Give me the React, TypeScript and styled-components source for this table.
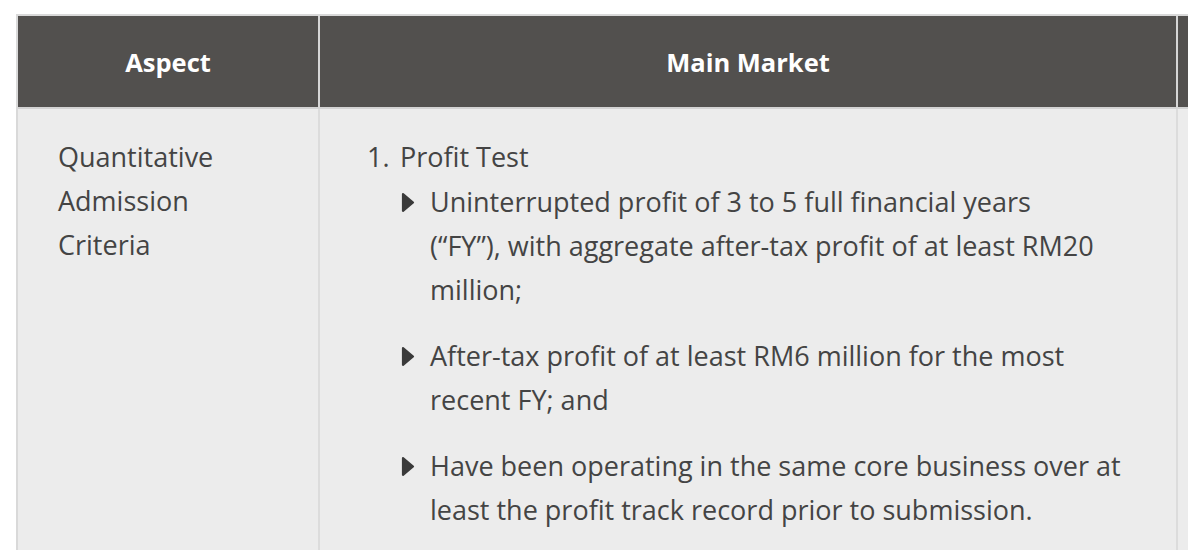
import React from "react";
import styled, { createGlobalStyle } from "styled-components";

const GlobalStyle = createGlobalStyle`
  html, body {
    margin: 0;
    padding: 0;
    overflow: hidden;
    background: #ffffff;
  }
  body {
    font-family: "Open Sans", "Noto Sans", "DejaVu Sans", sans-serif;
  }
`;

const Page = styled.div`
  padding: 14px 0 0 16px;
`;

const Table = styled.table`
  border-collapse: separate;
  border-spacing: 0;
  table-layout: fixed;
  width: 1562px;
  border-top: 2px solid #d9d9d9;
  border-left: 2px solid #d9d9d9;
`;

const Col = styled.col<{ $w: number }>`
  width: ${(p) => p.$w}px;
`;

const HeadCell = styled.th`
  height: 91px;
  padding: 0;
  background: #52504e;
  color: #ffffff;
  font-weight: 700;
  font-size: 25.5px;
  text-align: center;
  vertical-align: middle;
  border-right: 2px solid #d6d6d6;
  border-bottom: 2px solid #d3d3d3;
`;

const BodyCell = styled.td<{ $padLeft: number }>`
  background: #ececec;
  color: #444444;
  font-size: 27px;
  line-height: 44px;
  vertical-align: top;
  padding: 26px 46px 120px ${(p) => p.$padLeft}px;
  border-right: 2px solid #dcdcdc;
`;

const NumberedList = styled.ol`
  list-style: none;
  margin: 0;
  padding: 0;
`;

const NumberedItem = styled.li`
  display: grid;
  grid-template-columns: 33px 1fr;
`;

const Num = styled.span`
  display: block;
`;

const BulletList = styled.ul`
  list-style: none;
  margin: 1px 0 0;
  padding: 0;
  display: flex;
  flex-direction: column;
  gap: 22px;
`;

const BulletItem = styled.li`
  display: grid;
  grid-template-columns: 30px 1fr;
`;

const Marker = styled.svg`
  display: block;
  margin: 12px 0 0 1px;
`;

const Triangle = () => (
  <Marker width="14" height="21" viewBox="0 0 14 21" aria-hidden="true">
    <path
      d="M2 2.2 L12 10.5 L2 18.8 Z"
      fill="#3a3a3a"
      stroke="#3a3a3a"
      strokeWidth="2.2"
      strokeLinejoin="round"
    />
  </Marker>
);

const bullets: string[][] = [
  [
    "Uninterrupted profit of 3 to 5 full financial years",
    "(“FY”), with aggregate after-tax profit of at least RM20 million;",
  ],
  ["After-tax profit of at least RM6 million for the most recent FY; and"],
  [
    "Have been operating in the same core business over at least the profit track record prior to submission.",
  ],
];

export default function App() {
  return (
    <>
      <GlobalStyle />
      <Page>
        <Table>
          <colgroup>
            <Col $w={302} />
            <Col $w={858} />
            <Col $w={402} />
          </colgroup>
          <thead>
            <tr>
              <HeadCell>Aspect</HeadCell>
              <HeadCell>Main Market</HeadCell>
              <HeadCell />
            </tr>
          </thead>
          <tbody>
            <tr>
              <BodyCell $padLeft={40}>
                Quantitative
                <br />
                Admission
                <br />
                Criteria
              </BodyCell>
              <BodyCell $padLeft={47}>
                <NumberedList>
                  <NumberedItem>
                    <Num>1.</Num>
                    <div>
                      Profit Test
                      <BulletList>
                        {bullets.map((parts) => (
                          <BulletItem key={parts[0]}>
                            <Triangle />
                            <span>
                              {parts.map((p, i) => (
                                <React.Fragment key={p}>
                                  {i > 0 && <br />}
                                  {p}
                                </React.Fragment>
                              ))}
                            </span>
                          </BulletItem>
                        ))}
                      </BulletList>
                    </div>
                  </NumberedItem>
                </NumberedList>
              </BodyCell>
              <BodyCell $padLeft={47} />
            </tr>
          </tbody>
        </Table>
      </Page>
    </>
  );
}
